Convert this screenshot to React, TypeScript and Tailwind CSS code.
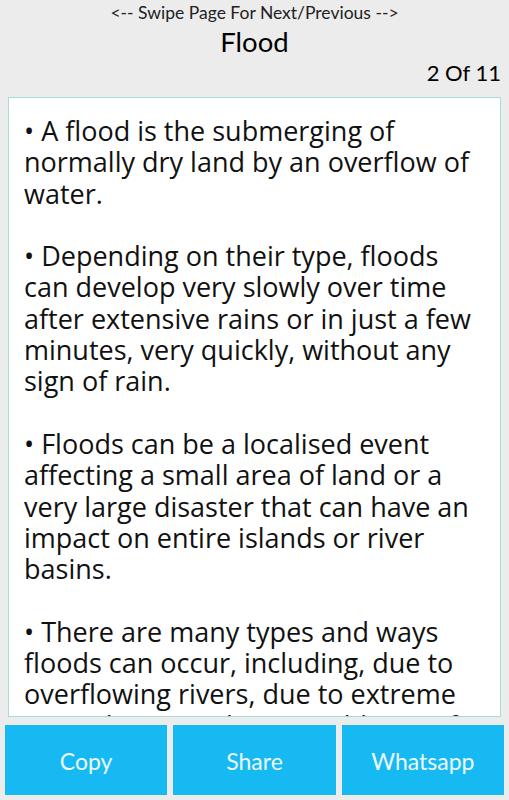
const PARAS = [
  ['• A flood is the submerging of', 'normally dry land by an overflow of', 'water.'],
  [
    '• Depending on their type, floods',
    'can develop very slowly over time',
    'after extensive rains or in just a few',
    'minutes, very quickly, without any',
    'sign of rain.',
  ],
  [
    '• Floods can be a localised event',
    'affecting a small area of land or a',
    'very large disaster that can have an',
    'impact on entire islands or river',
    'basins.',
  ],
  [
    '• There are many types and ways',
    'floods can occur, including, due to',
    'overflowing rivers, due to extreme',
    'coastal events, due to sudden artificial',
    'dam failures.',
  ],
]

export default function App() {
  return (
    <div
      className="flex flex-col h-[800px] bg-[#ececec] text-black overflow-hidden"
      style={{ fontFamily: 'Lato, "Open Sans", sans-serif' }}
    >
      {/* Header */}
      <div className="text-center text-[17.5px] leading-[20px] pt-[3px] text-[#222]">
        &lt;-- Swipe Page For Next/Previous --&gt;
      </div>
      <div className="text-center text-[27.5px] leading-[32px] mt-[3px]">Flood</div>
      <div className="text-right text-[22px] leading-[28px] pr-[8px] mt-[1px]">2 Of 11</div>

      {/* Content */}
      <div className="flex-1 min-h-0 mx-[8px] mt-[10px] bg-white border border-[#a6dcdc] overflow-hidden">
        <div
          className="pl-[15px] pt-[17px] text-[27px] leading-[31.3px] text-[#111] whitespace-nowrap"
          style={{ fontFamily: '"Open Sans", sans-serif' }}
        >
          {PARAS.map((lines, i) => (
            <p key={i} className="mb-[31.3px]">
              {lines.map((l, j) => (
                <span key={j} className="block">
                  {l}
                </span>
              ))}
            </p>
          ))}
        </div>
      </div>

      {/* Buttons */}
      <div className="flex gap-[6px] px-[5px] mt-[8px] mb-[5px] h-[70px]">
        {['Copy', 'Share', 'Whatsapp'].map(label => (
          <button
            key={label}
            className="flex-1 bg-[#16b9f2] text-[#eef9ff] text-[23px] pt-[3px] flex items-center justify-center"
          >
            {label}
          </button>
        ))}
      </div>
    </div>
  )
}
